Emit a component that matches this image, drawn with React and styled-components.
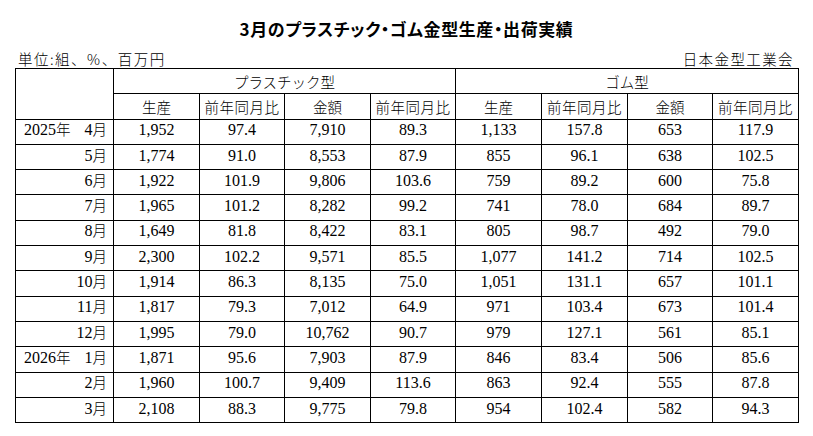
import React from 'react';
import styled, { createGlobalStyle } from 'styled-components';

const GlobalStyle = createGlobalStyle`
  body {
    margin: 0;
    background: #fff;
    color: #000;
    font-family: "Noto Sans CJK JP", sans-serif;
  }
`;

const Page = styled.div`
  width: 783px;
  padding-left: 15px;
`;

const Title = styled.h1`
  margin: 19px 0 9px;
  height: 20px;
  line-height: 20px;
  font-size: 17px;
  font-weight: 700;
  text-align: center;
  font-family: "Noto Sans CJK JP", sans-serif;
  font-feature-settings: "palt";
  letter-spacing: 0.6px;
`;

const CaptionRow = styled.div`
  display: flex;
  justify-content: space-between;
  align-items: center;
  height: 20px;
  font-size: 14.5px;
  font-weight: 300;
  padding: 0 4px 0 3px;
`;

const Unit = styled.span`
  letter-spacing: 1.5px;
`;

const Org = styled.span`
  letter-spacing: 1.4px;
`;

const Table = styled.table`
  border-collapse: collapse;
  table-layout: fixed;
  width: 783px;
  font-family: "Liberation Serif", "Noto Sans CJK JP", serif;
  font-size: 16px;

  tr {
    height: 25.3px;
  }

  td, th {
    border: 1px solid #000;
    padding: 0;
  }
`;

const Head = styled.th`
  font-family: "Noto Sans CJK JP", sans-serif;
  font-weight: 300;
  font-size: 14.5px;
  text-align: center;
  letter-spacing: ${(p) => (p.$wide ? '0.5px' : '0')};
`;

const Num = styled.td`
  text-align: center;
  padding-bottom: 3px !important;
  line-height: 1;
`;

const Label = styled.td`
  text-align: right;
  padding: 0 6px 3px 8px !important;
  line-height: 1;
`;

const Year = styled.span`
  float: left;
`;

const Ja = styled.span`
  font-family: "Noto Sans CJK JP", sans-serif;
  font-weight: 300;
  font-size: 14.5px;
`;

const widths = [98, 86, 85, 86, 85, 86, 86, 85, 86];

const rows = [
  ['2025', '4', '1,952', '97.4', '7,910', '89.3', '1,133', '157.8', '653', '117.9'],
  ['', '5', '1,774', '91.0', '8,553', '87.9', '855', '96.1', '638', '102.5'],
  ['', '6', '1,922', '101.9', '9,806', '103.6', '759', '89.2', '600', '75.8'],
  ['', '7', '1,965', '101.2', '8,282', '99.2', '741', '78.0', '684', '89.7'],
  ['', '8', '1,649', '81.8', '8,422', '83.1', '805', '98.7', '492', '79.0'],
  ['', '9', '2,300', '102.2', '9,571', '85.5', '1,077', '141.2', '714', '102.5'],
  ['', '10', '1,914', '86.3', '8,135', '75.0', '1,051', '131.1', '657', '101.1'],
  ['', '11', '1,817', '79.3', '7,012', '64.9', '971', '103.4', '673', '101.4'],
  ['', '12', '1,995', '79.0', '10,762', '90.7', '979', '127.1', '561', '85.1'],
  ['2026', '1', '1,871', '95.6', '7,903', '87.9', '846', '83.4', '506', '85.6'],
  ['', '2', '1,960', '100.7', '9,409', '113.6', '863', '92.4', '555', '87.8'],
  ['', '3', '2,108', '88.3', '9,775', '79.8', '954', '102.4', '582', '94.3'],
];

const subHeads = ['生産', '前年同月比', '金額', '前年同月比'];

export default function App() {
  return (
    <Page>
      <GlobalStyle />
      <Title>3月のプラスチック・ゴム金型生産・出荷実績</Title>
      <CaptionRow>
        <Unit>単位:組、%、百万円</Unit>
        <Org>日本金型工業会</Org>
      </CaptionRow>
      <Table>
        <colgroup>
          {widths.map((w, i) => (
            <col key={i} style={{ width: w }} />
          ))}
        </colgroup>
        <thead>
          <tr>
            <Head rowSpan={2} />
            <Head colSpan={4}>プラスチック型</Head>
            <Head colSpan={4}>ゴム型</Head>
          </tr>
          <tr>
            {[...subHeads, ...subHeads].map((h, i) => (
              <Head key={i} $wide={h.length > 2}>{h}</Head>
            ))}
          </tr>
        </thead>
        <tbody>
          {rows.map(([year, month, ...vals], r) => (
            <tr key={r}>
              <Label>
                {year && (
                  <Year>
                    {year}
                    <Ja>年</Ja>
                  </Year>
                )}
                {month}
                <Ja>月</Ja>
              </Label>
              {vals.map((v, i) => (
                <Num key={i}>{v}</Num>
              ))}
            </tr>
          ))}
        </tbody>
      </Table>
    </Page>
  );
}
